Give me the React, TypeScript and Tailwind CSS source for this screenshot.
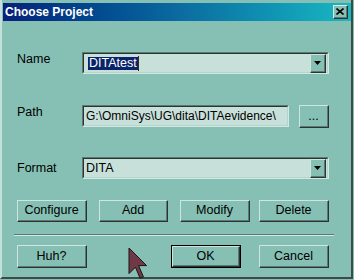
import React from 'react';

const FONT = { fontFamily: '"Liberation Sans", Arial, sans-serif' };

function Sunken({ className = '', children }: { className?: string; children?: React.ReactNode }) {
  return (
    <div className={`border border-t-[#5c7a74] border-l-[#5c7a74] border-b-[#d2e8e2] border-r-[#d2e8e2] ${className}`}>
      <div className="flex h-full items-center border border-t-[#2c3432] border-l-[#2c3432] border-b-[#b4d4cc] border-r-[#b4d4cc] bg-[#c8e0da]">
        {children}
      </div>
    </div>
  );
}

function Btn({ label, className = '', isDefault = false }: { label: string; className?: string; isDefault?: boolean }) {
  const face = (
    <div className="h-full border border-t-[#cfe6e0] border-l-[#cfe6e0] border-b-[#2c3432] border-r-[#2c3432]">
      <div className="flex h-full items-center justify-center border-b border-r border-b-[#5c7a74] border-r-[#5c7a74] text-[12.5px] text-black">
        {label}
      </div>
    </div>
  );
  if (isDefault) {
    return <div className={`border border-black ${className}`}>{face}</div>;
  }
  return <div className={className}>{face}</div>;
}

function DropArrow() {
  return (
    <div className="mr-[1px] h-[19px] w-[16px] border border-t-[#cfe6e0] border-l-[#cfe6e0] border-b-[#2c3432] border-r-[#2c3432]">
      <div className="flex h-full items-center justify-center border-b border-r border-b-[#5c7a74] border-r-[#5c7a74] bg-[#86c0b4]">
        <svg width="7" height="4" viewBox="0 0 7 4">
          <polygon points="0,0 7,0 3.5,4" fill="#000" />
        </svg>
      </div>
    </div>
  );
}

export default function App() {
  return (
    <div className="relative h-[280px] w-[354px] overflow-hidden bg-[#86c0b4]" style={FONT}>
      <div className="h-[279px] w-[353px] border-l-2 border-r-2 border-b-2 border-l-[#c4e0d8] border-r-[#3c4a48] border-b-[#3c4a48] pt-[3px] pl-[1px]">
        {/* title bar */}
        <div className="flex h-[18px] w-[348px] items-center justify-between bg-gradient-to-r from-[#08207a] via-[#0c6aa0] to-[#1ab8c2] pl-[2px] pr-[3px]">
          <span className="text-[12px] font-bold leading-none text-white">Choose Project</span>
          <div className="h-[14px] w-[15px] border border-t-[#d8ece6] border-l-[#d8ece6] border-b-[#2c3432] border-r-[#2c3432] bg-[#86c0b4]">
            <div className="flex h-full items-center justify-center border-b border-r border-b-[#5c7a74] border-r-[#5c7a74]">
              <svg width="8" height="7" viewBox="0 0 8 7">
                <path d="M0.5 0.5 L7.5 6.5 M7.5 0.5 L0.5 6.5" stroke="#000" strokeWidth="1.6" />
              </svg>
            </div>
          </div>
        </div>

        {/* Name */}
        <div className="mt-[31px] flex items-start pl-[14px]">
          <span className="w-[65px] text-[12.5px] leading-[14px] text-black">Name</span>
          <Sunken className="h-[22px] w-[247px]">
            <div className="flex flex-1 items-center pl-[4px]">
              <span className="bg-[#0a246a] px-[1px] text-[12.5px] leading-[13px] text-white">DITAtest</span>
              <span className="h-[15px] w-[1px] bg-[#3a2a10]" />
            </div>
            <DropArrow />
          </Sunken>
        </div>

        {/* Path */}
        <div className="mt-[31px] flex items-start pl-[14px]">
          <span className="w-[65px] text-[12.5px] leading-[14px] text-black">Path</span>
          <Sunken className="h-[22px] w-[207px]">
            <span className="pl-[2px] text-[12px] text-black">G:\OmniSys\UG\dita\DITAevidence\</span>
          </Sunken>
          <Btn label="..." className="ml-[10px] h-[23px] w-[30px]" />
        </div>

        {/* Format */}
        <div className="mt-[29px] flex items-center pl-[14px]">
          <span className="w-[65px] text-[12.5px] text-black">Format</span>
          <Sunken className="h-[22px] w-[247px]">
            <span className="flex-1 pl-[2px] text-[12.5px] text-black">DITA</span>
            <DropArrow />
          </Sunken>
        </div>

        {/* action buttons */}
        <div className="mt-[21px] flex pl-[14px]">
          <Btn label="Configure" className="h-[22px] w-[70px]" />
          <Btn label="Add" className="ml-[12px] h-[22px] w-[69px]" />
          <Btn label="Modify" className="ml-[12px] h-[22px] w-[70px]" />
          <Btn label="Delete" className="ml-[9px] h-[22px] w-[70px]" />
        </div>

        {/* separator */}
        <div className="mt-[12px] ml-[11px] w-[320px] border-t border-b border-t-[#5c7a74] border-b-[#d2e8e2]" />

        {/* bottom buttons */}
        <div className="mt-[9px] flex pl-[14px]">
          <Btn label="Huh?" className="h-[23px] w-[70px]" />
          <Btn label="OK" isDefault className="ml-[84px] h-[23px] w-[70px]" />
          <Btn label="Cancel" className="ml-[18px] h-[23px] w-[70px]" />
        </div>
      </div>

      {/* mouse pointer */}
      <svg className="absolute left-[128px] top-[247px]" width="20" height="33" viewBox="0 0 20 33">
        <polygon
          points="1,1 1,26.6 7.4,20.2 12.2,31.4 15.4,29.8 10.6,18.6 18.6,18.6"
          fill="#6e3a47"
          stroke="#1e1012"
          strokeWidth="1"
        />
      </svg>
    </div>
  );
}
